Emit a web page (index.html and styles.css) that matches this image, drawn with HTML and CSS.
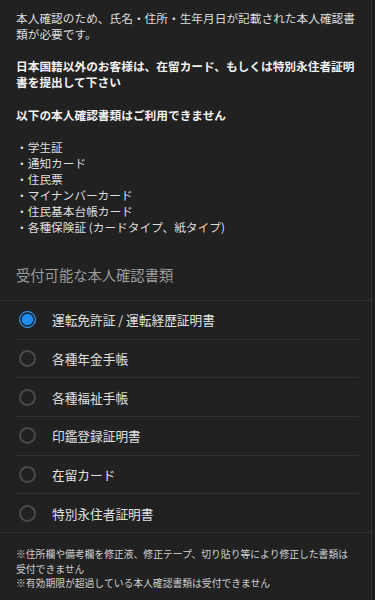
FILE: index.html
```html
<!DOCTYPE html>
<html lang="ja">

<head>
    <meta charset="UTF-8">
    <meta name="viewport" content="width=device-width, initial-scale=1.0">
    <title>本人確認書類</title>
    <link rel="stylesheet" href="styles.css">
</head>

<body>
    <div class="page">
        <div class="intro">
            <p>本人確認のため、氏名・住所・生年月日が記載された本人確認書<br>類が必要です。</p>
            <p class="strong">日本国籍以外のお客様は、在留カード、もしくは特別永住者証明<br>書を提出して下さい</p>
            <p class="strong">以下の本人確認書類はご利用できません</p>
            <ul class="ng-list">
                <li>・学生証</li>
                <li>・通知カード</li>
                <li>・住民票</li>
                <li>・マイナンバーカード</li>
                <li>・住民基本台帳カード</li>
                <li>・各種保険証 (カードタイプ、紙タイプ)</li>
            </ul>
        </div>

        <h2 class="section-title">受付可能な本人確認書類</h2>

        <div class="doc-list">
            <label class="doc-row">
                <span class="radio checked"></span>
                <span class="doc-name">運転免許証 / 運転経歴証明書</span>
            </label>
            <label class="doc-row">
                <span class="radio"></span>
                <span class="doc-name">各種年金手帳</span>
            </label>
            <label class="doc-row">
                <span class="radio"></span>
                <span class="doc-name">各種福祉手帳</span>
            </label>
            <label class="doc-row">
                <span class="radio"></span>
                <span class="doc-name">印鑑登録証明書</span>
            </label>
            <label class="doc-row">
                <span class="radio"></span>
                <span class="doc-name">在留カード</span>
            </label>
            <label class="doc-row">
                <span class="radio"></span>
                <span class="doc-name">特別永住者証明書</span>
            </label>
        </div>

        <div class="notes">
            <p>※住所欄や備考欄を修正液、修正テープ、切り貼り等により修正した書類は<br>受付できません</p>
            <p>※有効期限が超過している本人確認書類は受付できません</p>
        </div>
    </div>
</body>

</html>
```

FILE: styles.css
```css
html {
    background-color: #1d1d1d;
}

body {
    margin: 0;
    font-family: "Noto Sans CJK JP", "Noto Sans", sans-serif;
    color: #dedede;
}

.page {
    width: 371px;
    min-height: 600px;
    background-color: #212121;
    border-right: 1px solid #333333;
}

.intro {
    padding: 10px 12px 0 16px;
    font-size: 11.7px;
    line-height: 16.1px;
}

.intro p {
    margin: 0 0 16.1px;
}

.intro .strong {
    font-weight: bold;
    color: #f2f2f2;
}

.ng-list {
    list-style: none;
    margin: 0;
    padding: 0;
}

.section-title {
    margin: 0;
    padding: 30px 16px 14.5px;
    font-size: 14.3px;
    line-height: 20px;
    font-weight: normal;
    color: #9c9c9c;
    border-bottom: 1px solid #323232;
}

.doc-list {
    border-bottom: 1px solid #323232;
}

.doc-row {
    display: flex;
    align-items: center;
    height: 37.7px;
    margin: 0 12px 0 16px;
    padding-left: 2.5px;
    border-bottom: 1px solid #323232;
    cursor: pointer;
}

.doc-row:last-child {
    border-bottom: none;
}

.radio {
    box-sizing: border-box;
    width: 17px;
    height: 17px;
    border-radius: 50%;
    border: 2.2px solid #4a4a4a;
    flex-shrink: 0;
}

.radio.checked {
    border: 1.5px solid #3a9cf5;
    background-color: #1f8ef1;
    box-shadow: inset 0 0 0 1.7px #1a2430;
}

.doc-name {
    margin-left: 16.5px;
    font-size: 12.7px;
    color: #e0e0e0;
}

.notes {
    padding: 14.5px 12px 0 16px;
    font-size: 9.8px;
    line-height: 14.5px;
    color: #d0d0d0;
}

.notes p {
    margin: 0;
}
```
